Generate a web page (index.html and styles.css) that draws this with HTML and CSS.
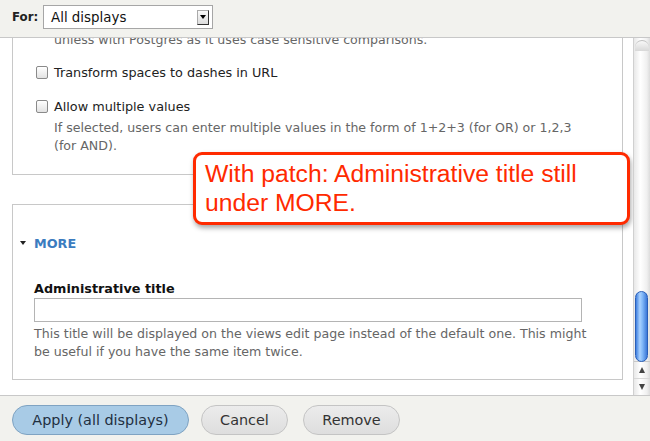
FILE: index.html
```html
<!DOCTYPE html>
<html>
<head>
<meta charset="utf-8">
<link rel="stylesheet" href="styles.css">
</head>
<body>
<div class="page">
  <div class="topbar">
    <span class="for-label">For:</span>
    <div class="select">
      <span class="select-text">All displays</span>
      <span class="select-arrow"><span class="tri"></span></span>
    </div>
  </div>
  <div class="main">
    <div class="viewport">
      <div class="scroller">
        <div class="fieldset fs1">
          <div class="desc first">unless with Postgres as it uses case sensitive comparisons.</div>
          <div class="check-row"><span class="checkbox"></span><span class="check-label">Transform spaces to dashes in URL</span></div>
          <div class="check-row row2"><span class="checkbox"></span><span class="check-label">Allow multiple values</span></div>
          <div class="desc indent">If selected, users can enter multiple values in the form of 1+2+3 (for OR) or 1,2,3 (for AND).</div>
        </div>
        <div class="fieldset fs2">
          <div class="more"><span class="more-tri"></span><span class="more-text">MORE</span></div>
          <div class="field-label">Administrative title</div>
          <div class="text-input"></div>
          <div class="desc field-desc">This title will be displayed on the views edit page instead of the default one. This might be useful if you have the same item twice.</div>
        </div>
      </div>
      <div class="callout">With patch: Administrative title still under MORE.</div>
    </div>
    <div class="scrollbar">
      <div class="track">
        <div class="track-cap"></div>
      </div>
      <div class="thumb"></div>
      <div class="arrows">
        <div class="arrow up"><span class="atri up-tri"></span></div>
        <div class="arrow down"><span class="atri down-tri"></span></div>
      </div>
    </div>
  </div>
  <div class="footer">
    <button class="btn primary">Apply (all displays)</button>
    <button class="btn cancel">Cancel</button>
    <button class="btn remove">Remove</button>
  </div>
</div>
</body>
</html>
```
FILE: styles.css
```css
html, body {
  margin: 0;
  padding: 0;
  background: #ffffff;
}
body {
  font-family: "DejaVu Sans", "Liberation Sans", sans-serif;
  font-size: 12.6px;
  color: #333;
}
.page {
  width: 650px;
  height: 441px;
  display: flex;
  flex-direction: column;
  overflow: hidden;
}
.topbar {
  height: 38px;
  flex: 0 0 38px;
  box-sizing: border-box;
  background: #f2f2ee;
  border-bottom: 1px solid #c8c8c8;
  display: flex;
  align-items: flex-start;
  padding: 5px 0 0 12px;
  gap: 6px;
}
.for-label {
  font-weight: bold;
  font-size: 11.8px;
  line-height: 24px;
  width: 25px;
  color: #222;
}
.select {
  width: 168px;
  height: 22px;
  border: 1px solid #a6a6a6;
  background: #fff;
  display: flex;
  align-items: center;
  justify-content: space-between;
}
.select-text {
  font-size: 13.4px;
  padding-left: 7px;
  color: #111;
}
.select-arrow {
  width: 10px;
  height: 13px;
  margin-right: 3px;
  border: 1px solid #aaa;
  border-right-color: #333;
  border-bottom-color: #333;
  background: linear-gradient(#fafafa, #dcdcdc);
  display: flex;
  align-items: center;
  justify-content: center;
}
.tri {
  width: 0;
  height: 0;
  border-left: 3px solid transparent;
  border-right: 3px solid transparent;
  border-top: 4px solid #000;
}
.main {
  flex: 0 0 357px;
  height: 357px;
  display: flex;
  border-bottom: 1px solid #c8c8c8;
}
.viewport {
  flex: 1;
  position: relative;
  overflow: hidden;
  background: #fff;
}
.scroller {
  margin-top: -52px;
  padding-left: 12px;
}
.fieldset {
  width: 609px;
  border: 1px solid #c8c8c8;
  box-sizing: content-box;
}
.fs1 {
  padding: 44px 0 19px 0;
}
.desc {
  color: #666;
  line-height: 18px;
}
.desc.first {
  padding-left: 41px;
}
.check-row {
  display: flex;
  align-items: center;
  height: 18px;
  margin-top: 14px;
  padding-left: 23px;
  gap: 6px;
}
.check-row.row2 {
  margin-top: 16px;
}
.checkbox {
  width: 10px;
  height: 11px;
  border: 1px solid #8a8a8a;
  border-radius: 2px;
  background: linear-gradient(#ffffff, #e2e2e2);
  box-shadow: inset 0 1px 0 #fff;
}
.check-label {
  color: #222;
  font-size: 12.8px;
}
.desc.indent {
  padding-left: 41px;
  padding-right: 30px;
  margin-top: 4px;
}
.fs2 {
  margin-top: 29px;
  padding: 0 0 18px 0;
}
.more {
  display: flex;
  align-items: center;
  margin-top: 29px;
  padding-left: 7px;
  gap: 8px;
  height: 18px;
}
.more-tri {
  width: 0;
  height: 0;
  border-left: 3px solid transparent;
  border-right: 3px solid transparent;
  border-top: 4px solid #222;
}
.more-text {
  color: #3b7cbf;
  font-weight: bold;
  font-size: 12.8px;
}
.field-label {
  font-weight: bold;
  color: #111;
  font-size: 12.8px;
  margin-top: 28px;
  padding-left: 21px;
  line-height: 18px;
}
.text-input {
  margin-left: 21px;
  width: 546px;
  height: 22px;
  border: 1px solid #b4b4b4;
  background: #fff;
}
.field-desc {
  margin-top: 3px;
  padding-left: 21px;
  padding-right: 18px;
}
.callout {
  position: absolute;
  left: 193px;
  top: 114px;
  width: 422px;
  height: 63px;
  border: 3px solid #ff2a00;
  border-radius: 9px;
  background: #fff;
  box-shadow: 1px 3px 5px rgba(0, 0, 0, 0.35);
  color: #ff2a00;
  font-family: "Liberation Sans", Arial, sans-serif;
  font-size: 24.7px;
  line-height: 29px;
  padding: 4px 0 0 9px;
}
.scrollbar {
  width: 17px;
  flex: 0 0 17px;
  border-left: 1px solid #d0d0d0;
  position: relative;
  background: linear-gradient(90deg, #e8e8e8, #ffffff 40%, #f0f0f0 80%, #dcdcdc);
  box-sizing: border-box;
  display: flex;
  flex-direction: column;
}
.track {
  flex: 1;
  position: relative;
}
.track-cap {
  height: 10px;
  margin: 2px 1px 0 1px;
  border-radius: 8px 8px 0 0;
  background: linear-gradient(#f8f8f8, #d8d8d8);
  border-top: 1px solid #c0c0c0;
}
.thumb {
  position: absolute;
  left: 1px;
  top: 253px;
  width: 13px;
  height: 71px;
  border-radius: 7px;
  border: 1px solid #2a5fb8;
  box-sizing: border-box;
  background: linear-gradient(90deg, #3f7fe0, #a9d2ff 35%, #7fb6f7 60%, #3b78d8);
}
.arrows {
  height: 33px;
  flex: 0 0 33px;
  border-top: 1px solid #c8c8c8;
  display: flex;
  flex-direction: column;
}
.arrow {
  flex: 1;
  display: flex;
  align-items: center;
  justify-content: center;
}
.arrow.down {
  border-top: 1px solid #d8d8d8;
}
.atri {
  width: 0;
  height: 0;
  border-left: 3.5px solid transparent;
  border-right: 3.5px solid transparent;
}
.up-tri {
  border-bottom: 6px solid #444;
}
.down-tri {
  border-top: 6px solid #444;
}
.footer {
  flex: 1;
  background: #f2f2ee;
  display: flex;
  align-items: center;
  padding-left: 12px;
  gap: 12px;
  padding-top: 2px;
}
.btn {
  font-family: "DejaVu Sans", "Liberation Sans", sans-serif;
  font-size: 14.4px;
  color: #333;
  height: 30px;
  border-radius: 15px;
  border: 1px solid #c4c4c4;
  background: linear-gradient(#ececec, #dedede);
  padding: 0;
  box-sizing: border-box;
}
.btn.primary {
  width: 177px;
  background: #a8cbe6;
  border-color: #7fa3c2;
  color: #1f2f3f;
}
.btn.cancel {
  width: 87px;
}
.btn.remove {
  width: 97px;
  margin-left: 3px;
}
```
